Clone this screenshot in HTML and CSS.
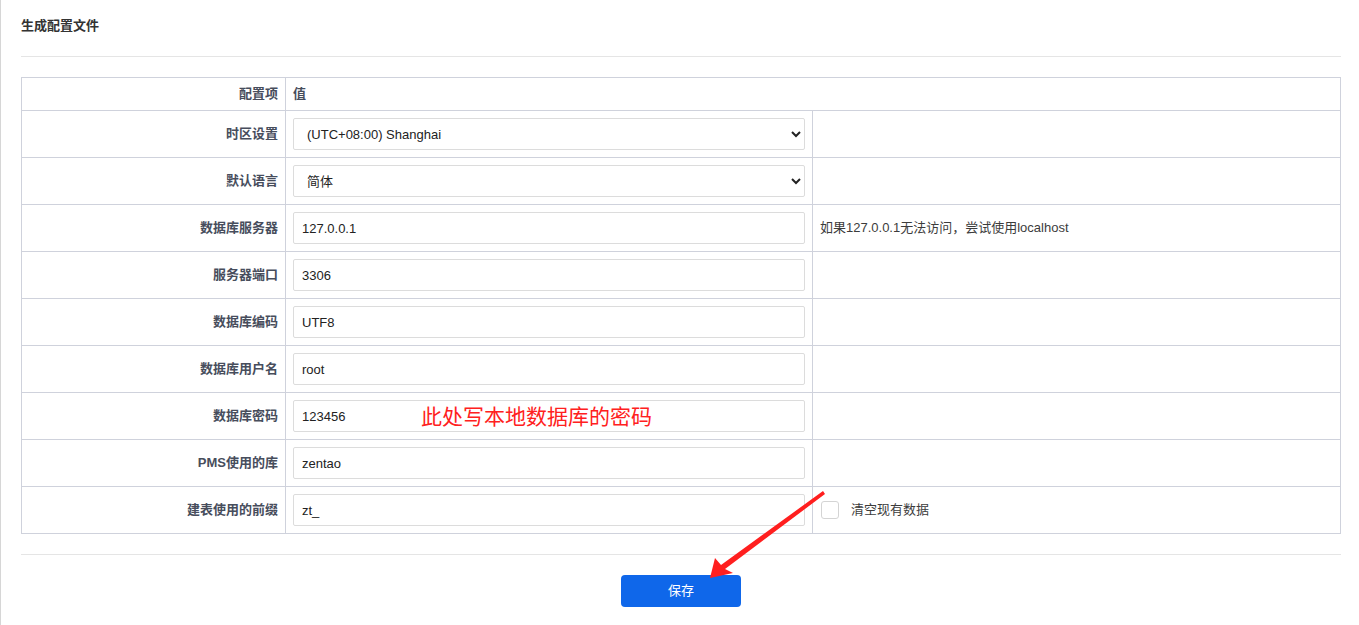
FILE: index.html
```html
<!DOCTYPE html>
<html lang="zh-CN">
<head>
	<meta charset="UTF-8">
	<title>生成配置文件</title>
	<link rel="stylesheet" href="styles.css">
</head>
<body>
	<div class="page">
		<div class="panel_hd">
			<strong>生成配置文件</strong>
		</div>
		<table class="cfg_table">
			<colgroup>
				<col class="c_label">
				<col class="c_value">
				<col>
			</colgroup>
			<tr class="head_row">
				<th>配置项</th>
				<th class="th_val" colspan="2">值</th>
			</tr>
			<tr>
				<th>时区设置</th>
				<td>
					<select class="ipt">
						<option>(UTC+08:00) Shanghai</option>
					</select>
				</td>
				<td></td>
			</tr>
			<tr>
				<th>默认语言</th>
				<td>
					<select class="ipt">
						<option>简体</option>
					</select>
				</td>
				<td></td>
			</tr>
			<tr>
				<th>数据库服务器</th>
				<td><input class="ipt" type="text" value="127.0.0.1"></td>
				<td class="tip">如果127.0.0.1无法访问，尝试使用localhost</td>
			</tr>
			<tr>
				<th>服务器端口</th>
				<td><input class="ipt" type="text" value="3306"></td>
				<td></td>
			</tr>
			<tr>
				<th>数据库编码</th>
				<td><input class="ipt" type="text" value="UTF8"></td>
				<td></td>
			</tr>
			<tr>
				<th>数据库用户名</th>
				<td><input class="ipt" type="text" value="root"></td>
				<td></td>
			</tr>
			<tr>
				<th>数据库密码</th>
				<td class="note_cell">
					<input class="ipt" type="text" value="123456">
					<span class="note">此处写本地数据库的密码</span>
				</td>
				<td></td>
			</tr>
			<tr>
				<th>PMS使用的库</th>
				<td><input class="ipt" type="text" value="zentao"></td>
				<td></td>
			</tr>
			<tr>
				<th>建表使用的前缀</th>
				<td><input class="ipt" type="text" value="zt_"></td>
				<td>
					<label class="chk"><input type="checkbox"><span>清空现有数据</span></label>
				</td>
			</tr>
		</table>
		<div class="panel_ft">
			<button class="btn_save" type="button">保存</button>
		</div>

		<!-- 标注箭头 -->
		<svg class="mark_arrow" width="1359" height="625" viewBox="0 0 1359 625">
			<polygon fill="#ff1f1f" points="823,491 825,494 725,569 733,573 710,578 715,558 721,565"/>
		</svg>
	</div>
</body>
</html>
```

FILE: styles.css
```css
*{
	margin: 0;
	padding: 0;
	box-sizing: border-box;
}
body{
	font-family: "Liberation Sans", "Noto Sans CJK SC", sans-serif;
	font-size: 13px;
	color: #333;
	background: #fff;
}
.page{
	position: relative;
	min-height: 625px;
	padding: 0 18px 0 20px;
	border-left: 1px solid #d6d6d6;
}
.panel_hd{
	height: 57px;
	padding-top: 16px;
	line-height: 20px;
	border-bottom: 1px solid #e5e5e5;
	color: #333;
	font-size: 13px;
}
.cfg_table{
	width: 100%;
	margin-top: 20px;
	border-collapse: collapse;
	table-layout: fixed;
}
.cfg_table .c_label{
	width: 264px;
}
.cfg_table .c_value{
	width: 527px;
}
.cfg_table th,
.cfg_table td{
	border: 1px solid #cfd2dc;
	height: 47px;
	vertical-align: middle;
}
.cfg_table th{
	text-align: right;
	padding: 0 7px 3px 0;
	font-size: 13px;
	font-weight: bold;
	color: #474d5c;
}
.cfg_table .head_row th{
	height: 33px;
	padding-bottom: 4px;
}
.cfg_table .head_row .th_val{
	text-align: left;
	padding-left: 7px;
}
.cfg_table td{
	padding: 0 7px;
}
.cfg_table td.tip{
	padding-bottom: 3px;
	color: #3c3c3c;
	font-size: 13px;
}
.ipt{
	display: block;
	width: 100%;
	height: 32px;
	border: 1px solid #dcdcdc;
	border-radius: 2px;
	padding: 0 8px;
	background: #fff;
	font-family: "Liberation Sans", "Noto Sans CJK SC", sans-serif;
	font-size: 13px;
	color: #222;
	outline: none;
}
select.ipt{
	padding: 0 6px 0 9px;
}
.note_cell{
	position: relative;
}
.note{
	position: absolute;
	left: 135px;
	top: 9px;
	font-size: 21px;
	line-height: 26px;
	color: #ff2020;
	font-family: "Noto Sans CJK SC", sans-serif;
}
.chk{
	display: flex;
	align-items: center;
	gap: 12px;
	font-size: 13px;
	color: #3c3c3c;
}
.chk span{
	margin-top: -3px;
}
.chk input{
	-webkit-appearance: none;
	appearance: none;
	width: 18px;
	height: 18px;
	border: 1px solid #d4d4d4;
	border-radius: 3px;
	background: #fff;
	margin-left: 1px;
}
.panel_ft{
	margin-top: 20px;
	padding-top: 20px;
	border-top: 1px solid #e5e5e5;
	text-align: center;
}
.btn_save{
	width: 120px;
	height: 32px;
	padding-bottom: 3px;
	border: none;
	border-radius: 4px;
	background: #0f67ea;
	color: #fff;
	font-family: "Noto Sans CJK SC", sans-serif;
	font-size: 13px;
	cursor: pointer;
}
.mark_arrow{
	position: absolute;
	left: -1px;
	top: 0;
	pointer-events: none;
}
```
